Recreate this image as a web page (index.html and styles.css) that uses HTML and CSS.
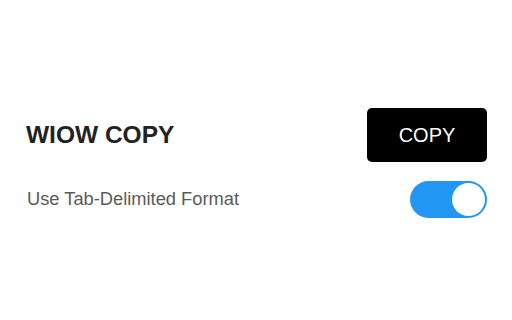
FILE: index.html
```html
<!DOCTYPE html>
<html>
<head>
<meta charset="utf-8">
<link rel="stylesheet" href="styles.css">
</head>
<body>
<div class="panel">
  <div class="row head">
    <h1 class="title">WIOW COPY</h1>
    <button class="copy">COPY</button>
  </div>
  <div class="row opt">
    <span class="label">Use Tab-Delimited Format</span>
    <span class="toggle"><span class="knob"></span></span>
  </div>
</div>
</body>
</html>
```
FILE: styles.css
```css
html, body {
  margin: 0;
  padding: 0;
  background: #fff;
}
body {
  font-family: "Liberation Sans", Arial, sans-serif;
}
.panel {
  padding: 108px 25px 0 26px;
  display: flex;
  flex-direction: column;
  gap: 19px;
}
.row {
  display: flex;
  align-items: center;
  justify-content: space-between;
}
.title {
  margin: 0;
  font-size: 24.5px;
  font-weight: bold;
  color: #222;
  line-height: 1;
}
.copy {
  width: 120px;
  height: 54px;
  background: #000;
  color: #fff;
  border: none;
  border-radius: 5px;
  font-family: "Liberation Sans", Arial, sans-serif;
  font-size: 20px;
  padding: 0;
}
.label {
  font-size: 18.3px;
  color: #5a5a5a;
  margin-left: 1px;
  position: relative;
  top: -1px;
}
.toggle {
  width: 77px;
  height: 37px;
  border-radius: 19px;
  background: #2196f3;
  display: flex;
  align-items: center;
  justify-content: flex-end;
  padding: 0 2px;
  box-sizing: border-box;
}
.knob {
  width: 33px;
  height: 33px;
  border-radius: 50%;
  background: #fff;
}
```
